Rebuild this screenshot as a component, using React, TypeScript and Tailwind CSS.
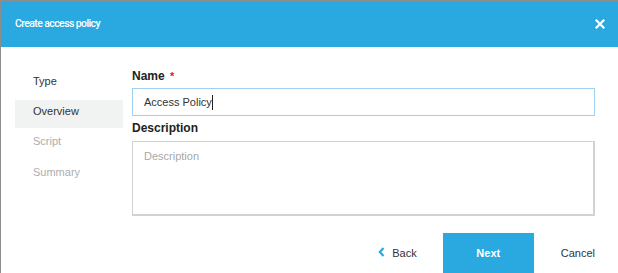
import React from "react";

export default function App() {
  const font = { fontFamily: '"Liberation Sans", Arial, sans-serif' };
  return (
    <div
      className="w-[618px] h-[273px] overflow-hidden bg-white border-l border-t border-[#8c8c8c] flex flex-col"
      style={font}
    >
      <div className="h-[46px] shrink-0 bg-[#29a9e0] flex items-center justify-between pl-[14px] pr-[12px]">
        <span
          className="text-white text-[10.5px] font-medium tracking-[-0.6px] mt-[-1px]"
          style={{ fontFamily: 'Roboto, "Liberation Sans", sans-serif' }}
        >
          Create access policy
        </span>
        <svg width="10" height="10" viewBox="0 0 10 10" className="mr-[1px]">
          <path d="M1.5 1.5 L8.5 8.5 M8.5 1.5 L1.5 8.5" stroke="white" strokeWidth="2.2" strokeLinecap="square" />
        </svg>
      </div>
      <div className="flex flex-1">
        <div className="w-[122px] shrink-0 pl-[14px] pt-[19px] flex flex-col text-[11px]">
          <div className="h-[31px] flex items-center pl-[18px] pb-[1px] text-[#333]">Type</div>
          <div className="h-[28px] mt-[3px] flex items-center pl-[18px] pb-[5px] bg-[#f1f2f2] text-[#333]">Overview</div>
          <div className="h-[27px] flex items-center pl-[18px] pb-[1px] text-[#adadad]">Script</div>
          <div className="h-[34px] flex items-center pl-[18px] text-[#adadad]">Summary</div>
        </div>
        <div className="flex-1 flex flex-col pl-[9px] pr-[23px] pt-[21px]">
          <div className="text-[12px] font-bold text-[#222] leading-[16px]">
            Name <span className="text-[#e02020] text-[11px] ml-[2px]">*</span>
          </div>
          <div className="mt-[4px] h-[28px] border border-[#9fd0f0] flex items-center pl-[11px] text-[11px] text-[#333]">
            Access Policy<span className="inline-block w-[1px] h-[15px] bg-[#222]" />
          </div>
          <div className="mt-[4px] text-[12px] font-bold text-[#222] leading-[16px]">Description</div>
          <div className="mt-[5px] h-[75px] border border-[#d2d2d2] border-b-2 border-r-2 pl-[11px] pt-[6px] text-[11px] text-[#a8a8a8]">
            Description
          </div>
          <div className="mt-[17px] flex items-start justify-end text-[11px]">
            <div className="h-[40px] flex items-center text-[#333] mr-[26px]">
              <svg width="7" height="10" viewBox="0 0 7 10" className="mr-[7px] mb-[2px]">
                <path d="M5.5 1 L1.8 5 L5.5 9" fill="none" stroke="#29a9e0" strokeWidth="2.2" />
              </svg>
              Back
            </div>
            <div className="w-[91px] h-[40px] bg-[#29a9e0] text-white font-bold flex items-center justify-center">Next</div>
            <div className="h-[40px] flex items-center text-[#333] ml-[27px]">Cancel</div>
          </div>
        </div>
      </div>
    </div>
  );
}
